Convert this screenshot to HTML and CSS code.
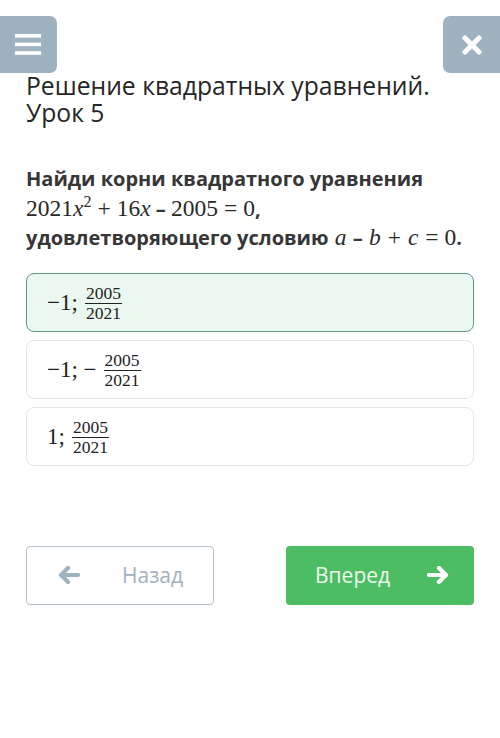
FILE: index.html
```html
<!DOCTYPE html>
<html lang="ru">
<head>
<meta charset="utf-8">
<link rel="stylesheet" href="styles.css">
</head>
<body>
<div class="page">
  <header class="topbar">
    <button class="tb-btn tb-menu" aria-label="Меню">
      <svg width="26" height="22" viewBox="0 0 26 22"><rect x="0" y="0" width="26" height="3.6" fill="#fff"/><rect x="0" y="8.6" width="26" height="3.6" fill="#fff"/><rect x="0" y="17.2" width="26" height="3.6" fill="#fff"/></svg>
    </button>
    <button class="tb-btn tb-close" aria-label="Закрыть">
      <svg width="20" height="20" viewBox="0 0 20 20"><path d="M3 3 L17 17 M17 3 L3 17" stroke="#fff" stroke-width="5" stroke-linecap="round"/></svg>
    </button>
  </header>

  <h1 class="title">Решение квадратных уравнений.<br>Урок 5</h1>

  <div class="question">
    Найди корни квадратного уравнения<br>
    <span class="m">2021<i>x</i><sup>2</sup><span class="op">+</span>16<i>x</i></span> – <span class="m">2005<span class="op">=</span>0</span>,<br>
    удовлетворяющего условию <span class="m"><i class="v">a</i></span> – <span class="m"><i class="v">b</i><span class="op">+</span><i class="v">c</i><span class="op">=</span>0</span>.
  </div>

  <div class="options">
    <div class="option selected">
      <span class="m big">−1;</span>
      <span class="frac"><span class="num">2005</span><span class="den">2021</span></span>
    </div>
    <div class="option">
      <span class="m big">−1; −</span>
      <span class="frac"><span class="num">2005</span><span class="den">2021</span></span>
    </div>
    <div class="option">
      <span class="m big">1;</span>
      <span class="frac"><span class="num">2005</span><span class="den">2021</span></span>
    </div>
  </div>

  <div class="nav">
    <button class="nav-btn back">
      <svg width="22" height="18" viewBox="0 0 22 18"><path d="M10 2 L3 9 L10 16 M3.5 9 H20" stroke="#9fb2c0" stroke-width="4.2" fill="none" stroke-linecap="round" stroke-linejoin="round"/></svg>
      <span>Назад</span>
    </button>
    <button class="nav-btn next">
      <span>Вперед</span>
      <svg width="22" height="18" viewBox="0 0 22 18"><path d="M12 2 L19 9 L12 16 M18.5 9 H2" stroke="#fff" stroke-width="4.2" fill="none" stroke-linecap="round" stroke-linejoin="round"/></svg>
    </button>
  </div>
</div>
</body>
</html>
```

FILE: styles.css
```css
* { box-sizing: border-box; }
html, body { margin: 0; padding: 0; background: #fff; }
body { font-family: "Open Sans", "Noto Sans", sans-serif; color: #2a2a2a; }
.page { width: 500px; }

.topbar {
  display: flex;
  justify-content: space-between;
  padding-top: 16px;
}
.tb-btn {
  width: 57px;
  height: 57px;
  border: 0;
  padding: 0;
  background: #9fb2bf;
  display: flex;
  align-items: center;
  justify-content: center;
}
.tb-menu { border-radius: 0 7px 7px 0; padding-right: 2px; }
.tb-close { border-radius: 7px 0 0 7px; }

.title {
  margin: -1px 0 0 26px;
  font-weight: 400;
  font-size: 24.7px;
  line-height: 27px;
  color: #262626;
}

.question {
  margin: 39px 0 0 26px;
  font-weight: 700;
  font-size: 20px;
  line-height: 28.5px;
  color: #363636;
}
.m {
  font-family: "Liberation Serif", "DejaVu Serif", serif;
  font-weight: 400;
  font-size: 23.5px;
  color: #2a2a2a;
}
.m i { font-style: italic; }
.m i.v { padding: 0 1px; }
.m sup { font-size: 16px; line-height: 0; vertical-align: 9px; }
.op { margin: 0 6px; }

.options {
  margin: 20px 26px 0 26px;
  display: flex;
  flex-direction: column;
  gap: 8px;
}
.option {
  height: 59px;
  border: 1.5px solid #e4e6e8;
  border-radius: 8px;
  background: #fff;
  display: flex;
  align-items: center;
  padding-left: 20px;
  gap: 7px;
}
.option.selected {
  background: #ebf8f0;
  border-color: #5e9a82;
}
.big { font-size: 23px; line-height: 1; color: #222; }
.frac {
  display: inline-flex;
  flex-direction: column;
  align-items: center;
  font-family: "Liberation Serif", "DejaVu Serif", serif;
  font-size: 17.5px;
  line-height: 15px;
  color: #222;
  margin-top: 3px;
}
.frac .num { border-bottom: 1.2px solid #222; padding: 0 1px 2px; }
.frac .den { padding-top: 2px; }

.nav {
  margin: 80px 26px 0 26px;
  display: flex;
  justify-content: space-between;
}
.nav-btn {
  width: 188px;
  height: 59px;
  border-radius: 4px;
  font-family: "Open Sans", sans-serif;
  font-size: 21px;
  display: flex;
  align-items: center;
  padding: 0;
}
.back {
  background: #fff;
  border: 1.5px solid #b4c1cb;
  color: #a3b1bc;
  padding-left: 31px;
  gap: 42px;
}
.next {
  background: #4dbd63;
  border: 0;
  color: #eef9ee;
  padding-left: 29px;
  gap: 37px;
}
```
